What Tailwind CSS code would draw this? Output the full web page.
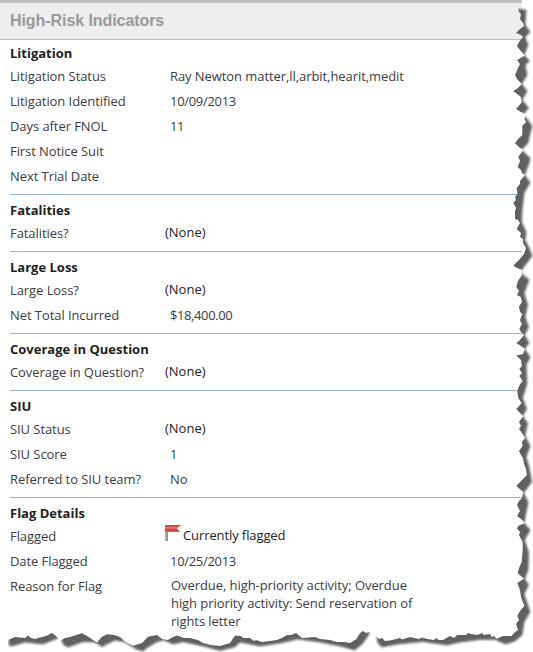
<!DOCTYPE html>
<html lang="en">
<head>
<meta charset="utf-8">
<title>High-Risk Indicators</title>
<script src="https://cdn.jsdelivr.net/npm/@tailwindcss/browser@4"></script>
</head>
<body class="bg-white">
<main class="relative w-[533px] h-[652px] overflow-hidden bg-white font-['Open_Sans',sans-serif] text-[13px] tracking-[-0.07px] text-[#3c3c44]">
  <header class="w-[522px] h-10 border-t-[3px] border-b border-[#c0c0c0] bg-[#eeeeee] pl-2.5 flex items-center">
    <h1 class="font-['Liberation_Sans',Arial,sans-serif] font-bold text-[16px] leading-none text-[#999999]">High-Risk Indicators</h1>
  </header>

  <section class="ml-2.5 w-[512px] pt-0.5 pb-[5px] border-b border-[#94b3cd]">
    <h2 class="h-[22px] leading-[22px] font-bold tracking-normal text-[#222222]">Litigation</h2>
    <div class="flex h-[25px] leading-[25px]"><span class="w-40">Litigation Status</span><span>Ray Newton matter,ll,arbit,hearit,medit</span></div>
    <div class="flex h-[25px] leading-[25px]"><span class="w-40">Litigation Identified</span><span class="tracking-[-0.3px]">10/09/2013</span></div>
    <div class="flex h-[25px] leading-[25px]"><span class="w-40">Days after FNOL</span><span class="tracking-[-0.4px]">11</span></div>
    <div class="flex h-[25px] leading-[25px]"><span class="w-40">First Notice Suit</span></div>
    <div class="flex h-[25px] leading-[25px]"><span class="w-40">Next Trial Date</span></div>
  </section>

  <section class="ml-2.5 w-[512px] pt-1 pb-[5px] border-b border-[#94b3cd]">
    <h2 class="h-[22px] leading-[22px] font-bold tracking-normal text-[#222222]">Fatalities</h2>
    <div class="flex h-[25px] leading-[25px]"><span class="w-[155px]">Fatalities?</span><span class="leading-[23px] tracking-normal text-[#222222]">(None)</span></div>
  </section>

  <section class="ml-2.5 w-[512px] pt-1 pb-[5px] border-b border-[#94b3cd]">
    <h2 class="h-[22px] leading-[22px] font-bold tracking-normal text-[#222222]">Large Loss</h2>
    <div class="flex h-[25px] leading-[25px]"><span class="w-[155px]">Large Loss?</span><span class="leading-[23px] tracking-normal text-[#222222]">(None)</span></div>
    <div class="flex h-[25px] leading-[25px]"><span class="w-40">Net Total Incurred</span><span class="tracking-[-0.4px]">$18,400.00</span></div>
  </section>

  <section class="ml-2.5 w-[512px] pt-1 pb-[5px] border-b border-[#94b3cd]">
    <h2 class="h-[22px] leading-[22px] font-bold tracking-normal text-[#222222]">Coverage in Question</h2>
    <div class="flex h-[25px] leading-[25px]"><span class="w-[155px]">Coverage in Question?</span><span class="leading-[23px] tracking-normal text-[#222222]">(None)</span></div>
  </section>

  <section class="ml-2.5 w-[512px] pt-1 pb-[5px] border-b border-[#94b3cd]">
    <h2 class="h-[22px] leading-[22px] font-bold tracking-normal text-[#222222]">SIU</h2>
    <div class="flex h-[25px] leading-[25px]"><span class="w-[155px]">SIU Status</span><span class="leading-[23px] tracking-normal text-[#222222]">(None)</span></div>
    <div class="flex h-[25px] leading-[25px]"><span class="w-40">SIU Score</span><span>1</span></div>
    <div class="flex h-[25px] leading-[25px]"><span class="w-40">Referred to SIU team?</span><span>No</span></div>
  </section>

  <section class="ml-2.5 w-[512px] pt-1">
    <h2 class="h-[22px] leading-[22px] font-bold tracking-normal text-[#222222]">Flag Details</h2>
    <div class="flex h-[25px] leading-[25px]">
      <span class="w-[155px]">Flagged</span>
      <svg class="w-[18px] h-[18px]" viewBox="0 0 18 18">
        <defs>
          <linearGradient id="flag" x1="0" y1="0" x2="0" y2="1"><stop offset="0" stop-color="#b83a3a"/><stop offset=".4" stop-color="#e27a7a"/><stop offset=".75" stop-color="#c93a3a"/><stop offset="1" stop-color="#dc8080"/></linearGradient>
          <linearGradient id="pole" x1="0" y1="0" x2="1" y2="0"><stop offset="0" stop-color="#b8b8b8"/><stop offset="1" stop-color="#8c8c8c"/></linearGradient>
        </defs>
        <rect x="0" y="1" width="3" height="16" fill="url(#pole)"/>
        <path d="M0 1H16L12 4.5L15.5 8H3V7H0Z" fill="url(#flag)"/>
      </svg>
      <span class="leading-[23px] tracking-[-0.1px] text-[#222222]">Currently flagged</span>
    </div>
    <div class="flex h-[25px] leading-[25px]"><span class="w-40">Date Flagged</span><span class="tracking-[-0.3px]">10/25/2013</span></div>
    <div class="flex leading-[25px]"><span class="w-[161px]">Reason for Flag</span><span class="pt-[2px] leading-[18px]">Overdue, high-priority activity; Overdue<br>high priority activity: Send reservation of<br>rights letter</span></div>
  </section>

  <!-- Torn paper edge: soft outer shadow, cut sharply along the inner tear -->
  <svg class="absolute inset-0 w-[533px] h-[652px]" viewBox="0 0 533 652">
    <defs>
      <filter id="soft" filterUnits="userSpaceOnUse" x="-20" y="-20" width="580" height="700"><feGaussianBlur stdDeviation="1.3"/></filter>
      <clipPath id="tear"><path d="M540 4L518 8L519 12L521 14L520 19L523 23L524 26L520 29L516 33L521 35L523 37L519 42L517 46L520 50L525 55.5L517 60L520 64L518 68L515 75L517 79L521.7 84L518 88L513.3 91L517 94L521 97L521.7 102.5L516 109L521 112L526 114.5L524.3 119L526 122L522.3 126V135L518 139L515 143.3L519 147L523.5 150L518.3 156.7L520 161L517.7 167L521 170L522 173L525 175L520 181V184L516.7 188L517.5 194L515 197L516 200L513.3 203L516 208L515 211V219L518 220L520 223L516.7 229L521 233L520 237L523 239V243L526 248L524 254L519 260L513.3 265.5L517 268L521.7 270L522 275L518 281L516.3 286.7L519 291L517 295L520.7 297L522 302L519 306.5L520 312L522.3 314L520 320L522 324L519.3 329L521 332L524 335L519 341L516.3 343L521 346L525 349L523 354L516.3 355.5L521 360L522 366L519.3 369L522 373L519.3 376L522.7 380.7L519 386L517.3 391L518.3 398L521.7 403L516.3 409L520 413L523.3 416L519 422L521 426L519 429L522 433L525 438L522 442L522.5 446L519 451L521 455L523 458L524 464L526 469L527 475L521 481L516.3 486L523.3 492L522 498L519 501L517 505L520 511L517 516L521 519L525 523L518 526L517 528.7L520 532L519 535L522.7 542V550L521.7 562L519 568L517.7 573L524 578.7L517.3 583L520 590L521 597L524.3 606L520 611L517.3 616L519 620L516 624L518 630L514 633L511.7 636H503L496.7 638.7L494 636L491.7 637L490 634L483 635V633L477 635L470 633.7L468 633L466 635H457L454 638L450 636L443 640H439L436 638L434 640L427 639L422 637.5L419 639L410 637L402 639.5L400 638L390 640.5L385 641L382 638L379.5 639L369 632L366 633L363 631L360 633L356.5 639L350 643L344 642L337 642L330 640L320 639L315 637L302 638L296 633L291 635L287 635L282 638L277 640L262 642L256 640L254 641L250 638L243 638L241 636L235 635.5L230 643L220 646L211 645L203 643L198 640L190 638L184 638L177 635.5L173 637L168 640L162 639L157 635L148 636.7L142 643L133 645.7L125 641.7L120 637L114 635L107 634.3L101.7 637L97 642.5L90 638L87 636L82 633.3L76 635L70 637L65 638L60 641L56 636L52 633L46 636L42 637L35 639L31 638L28 635.5L25 638L15 637L8 640V660H540Z"/></clipPath>
    </defs>
    <g clip-path="url(#tear)">
      <path filter="url(#soft)" fill="#606060" stroke="#606060" stroke-width=".8" d="M9 600V645L12 646L25 642L43 644L53 640L60 637L64 645L68 647L83 641.7L95 642L101.7 646.7L115 640L125 642L136 649L143 651L148 647L157 641.7L164 640L173 644L183 641.7L203 646L220 650.5L235 646.7L240 642L260 646L280 643L298 639L320 642L340 646L355 650L363 643L368.5 635L371 625L375 625L378 643L382 647L397 644L423 641.5L447 645L460 642L480 639.5L495 639.5L505.7 644L515 641L522 635L524 622L530 612L524 594L528.5 585L524.5 579L528 570L528.5 552L524.5 540L530 530L524 523L528 502L523.5 493L531.5 482L529 467L526 457L530 446L525 436L527.5 423L522.5 416L526.5 409L522.5 398L527 383L526 365L530 357L524.5 349L529 343L524.5 335L528.5 327L525 317L527.5 305L524 293L529 280L520 272L532 256L529 248L525 240L526 232L521.5 222L522 210L524 193L530 182.5L524.5 175L529 163L530 158L521.5 150L528 143L530 133L532 126L527 119L523 114.5L528.5 108L522 100L527 91L521.5 84L527 75L525 65L529.5 61L524 55L528 45L525 37L530 32L525 25L526 10L500 8Z"/>
    </g>
  </svg>
</main>
</body>
</html>
